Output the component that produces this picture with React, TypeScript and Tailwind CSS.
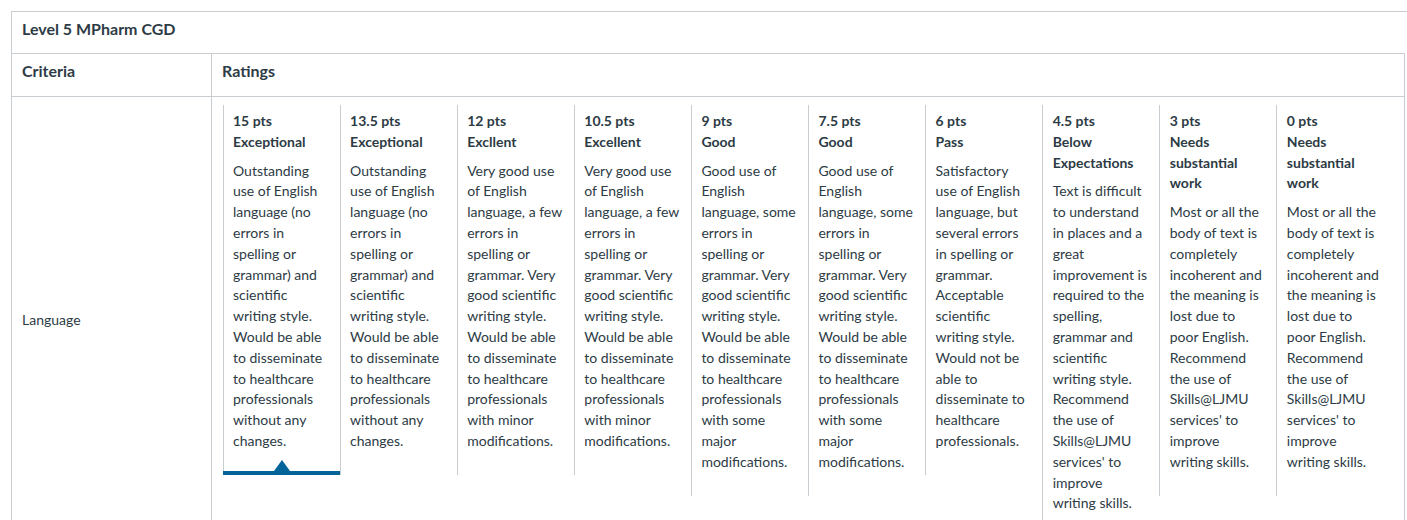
import React from 'react';

interface Rating {
  points: string;
  title: string;
  description: string;
  selected?: boolean;
}

const ratings: Rating[] = [
  {
    points: '15 pts',
    title: 'Exceptional',
    description:
      'Outstanding use of English language (no errors in spelling or grammar) and scientific writing style. Would be able to disseminate to healthcare professionals without any changes.',
    selected: true,
  },
  {
    points: '13.5 pts',
    title: 'Exceptional',
    description:
      'Outstanding use of English language (no errors in spelling or grammar) and scientific writing style. Would be able to disseminate to healthcare professionals without any changes.',
  },
  {
    points: '12 pts',
    title: 'Excllent',
    description:
      'Very good use of English language, a few errors in spelling or grammar. Very good scientific writing style. Would be able to disseminate to healthcare professionals with minor modifications.',
  },
  {
    points: '10.5 pts',
    title: 'Excellent',
    description:
      'Very good use of English language, a few errors in spelling or grammar. Very good scientific writing style. Would be able to disseminate to healthcare professionals with minor modifications.',
  },
  {
    points: '9 pts',
    title: 'Good',
    description:
      'Good use of English language, some errors in spelling or grammar. Very good scientific writing style. Would be able to disseminate to healthcare professionals with some major modifications.',
  },
  {
    points: '7.5 pts',
    title: 'Good',
    description:
      'Good use of English language, some errors in spelling or grammar. Very good scientific writing style. Would be able to disseminate to healthcare professionals with some major modifications.',
  },
  {
    points: '6 pts',
    title: 'Pass',
    description:
      'Satisfactory use of English language, but several errors in spelling or grammar. Acceptable scientific writing style. Would not be able to disseminate to healthcare professionals.',
  },
  {
    points: '4.5 pts',
    title: 'Below Expectations',
    description:
      "Text is difficult to understand in places and a great improvement is required to the spelling, grammar and scientific writing style. Recommend the use of Skills@LJMU services' to improve writing skills.",
  },
  {
    points: '3 pts',
    title: 'Needs substantial work',
    description:
      "Most or all the body of text is completely incoherent and the meaning is lost due to poor English. Recommend the use of Skills@LJMU services' to improve writing skills.",
  },
  {
    points: '0 pts',
    title: 'Needs substantial work',
    description:
      "Most or all the body of text is completely incoherent and the meaning is lost due to poor English. Recommend the use of Skills@LJMU services' to improve writing skills.",
  },
];

const RatingCell: React.FC<{ rating: Rating }> = ({ rating }) => (
  <div className="relative w-[117.1px] shrink-0 self-start border-l border-[#c7cdd1] pl-[9.5px] pr-[11px] pt-[6px] pb-[23px]">
    <div className="font-bold">{rating.points}</div>
    <div className="font-bold">{rating.title}</div>
    <div className="mt-2">{rating.description}</div>
    {rating.selected && (
      <>
        <div className="absolute left-[-1px] right-0 bottom-0 h-[4px] bg-[#006399]" />
        <div className="absolute bottom-[4px] left-1/2 -translate-x-1/2 w-0 h-0 border-l-[8px] border-r-[8px] border-b-[11px] border-l-transparent border-r-transparent border-b-[#006399]" />
      </>
    )}
  </div>
);

export default function App() {
  return (
    <div
      className="w-[1407px] h-[520px] overflow-hidden bg-white text-[#2d3b45] text-[14px] leading-[20.8px]"
      style={{ fontFamily: 'Lato, "Liberation Sans", sans-serif' }}
    >
      <div className="pl-[11px] pt-[11px]">
        <div className="w-[1410px] h-[42px] border-t border-l border-[#c7cdd1] pl-[10px] pt-[7px] font-bold text-[16px] leading-[20px]">
          Level 5 MPharm CGD
        </div>
        <div className="w-[1394px] border border-b-0 border-[#c7cdd1]">
          <div className="flex h-[43px] border-b border-[#c7cdd1] font-bold text-[16px] leading-[20px]">
            <div className="w-[200px] shrink-0 border-r border-[#c7cdd1] pl-[10px] pt-[7px]">
              Criteria
            </div>
            <div className="pl-[10px] pt-[7px]">Ratings</div>
          </div>
          <div className="flex">
            <div className="w-[200px] shrink-0 border-r border-[#c7cdd1] flex items-center pl-[10px] pb-[2px]">
              Language
            </div>
            <div className="flex pl-[10.5px] pt-2 pb-2">
              {ratings.map((r, i) => (
                <RatingCell key={i} rating={r} />
              ))}
            </div>
          </div>
        </div>
      </div>
    </div>
  );
}
